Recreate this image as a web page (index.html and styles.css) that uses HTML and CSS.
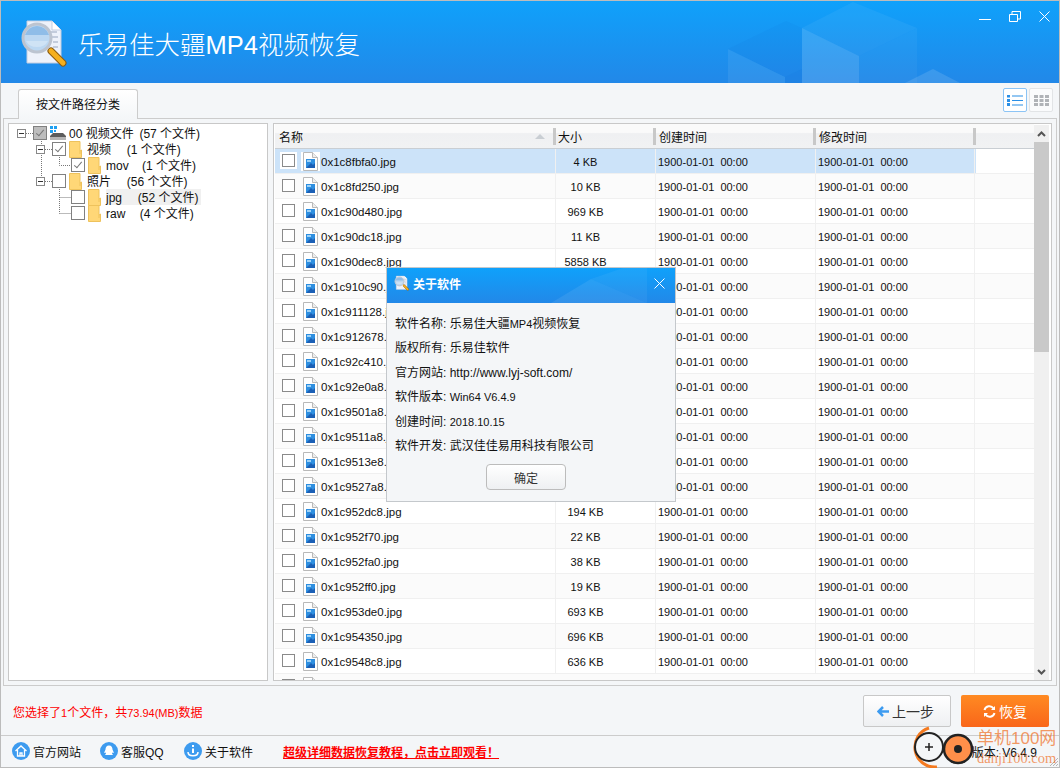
FILE: index.html
```html
<!DOCTYPE html>
<html>

<head>
    <meta charset='utf-8'>
    <title>乐易佳大疆MP4视频恢复</title>
    <link rel="stylesheet" href="styles.css">
</head>

<body>
    <svg class="defs" width="0" height="0">
        <symbol id="file" viewBox="0 0 15 19">
            <path d="M.5.5h9l5 5v13H.5z" fill="#fff" stroke="#b9b9b9" />
            <path d="M9.5.5v5h5" fill="#eee" stroke="#b9b9b9" />
            <rect x="3" y="7" width="9" height="9" fill="#2f8fe0" />
            <path d="M3 16l5-5 2 2 2-2v5z" fill="#1b5fb5" />
            <path d="M4 8h4v2H4z" fill="#9fd2f7" />
        </symbol>
        <symbol id="folder" viewBox="0 0 13 17">
            <path d="M.5.500h10.500v9.500l1.500-1v7.500H.5z" fill="#ffd777" stroke="#eec25c" />
            <path d="M11 10v3" stroke="#eec25c" />
        </symbol>
        <symbol id="logo" viewBox="0 0 50 50">
            <path d="M7 3h25l9 9v33H7z" fill="#eef2fa" stroke="#c3cde0" />
            <path d="M32 3v9h9" fill="#fff" stroke="#c3cde0" />
            <path d="M27 14h10M31 19h7M33 24h5M33 29h5" stroke="#c3ccdc" stroke-width="2" />
            <path d="M31 33l12 12" stroke="#8a5a10" stroke-width="7" stroke-linecap="round" />
            <path d="M31 33l12 12" stroke="#f5b01e" stroke-width="5" stroke-linecap="round" />
            <circle cx="17" cy="20" r="14" fill="#bcd8f2" stroke="#bcc4d0" stroke-width="3" />
            <path d="M5 17a12.500 12.500 0 0 1 24 0z" fill="#8fbde8" />
            <path d="M6 23h22a12 10 0 0 1-22 0z" fill="#cfe3f5" />
        </symbol>
    </svg>

    <div class="window">
        <div class="header">
            <svg class="header-bg" viewBox="0 0 1060 83">
                <path d="M802 27L853 1l64 26-58 28z" fill="#fff" fill-opacity=".05" />
                <path d="M802 27l57 28v28h-57z" fill="#fff" fill-opacity=".14" />
                <path d="M859 55l58-28v56h-58z" fill="#fff" fill-opacity=".04" />
                <path d="M728 48l58-28 16 7v41l-17 8z" fill="#0a50c8" fill-opacity=".05" />
                <path d="M728 48l57 28v7h-57z" fill="#fff" fill-opacity=".07" />
                <path d="M785 76l17-8v15h-17z" fill="#0a50c8" fill-opacity=".1" />
                <path d="M903 83l30-15 29 15z" fill="#fff" fill-opacity=".12" />
            </svg>
            <svg class="logo"><use href="#logo" /></svg>
            <div class="app-title">乐易佳大疆MP4视频恢复</div>
            <div class="win-buttons">
                <svg width="12" height="11" viewBox="0 0 12 11"><path d="M0 8.500h12" stroke="#fff" /></svg>
                <svg width="12" height="11" viewBox="0 0 12 11"><path d="M.5 3.500h8v7h-8zM3 3V.5h8.500V8H9" fill="none" stroke="#fff" /></svg>
                <svg width="11" height="11" viewBox="0 0 11 11"><path d="M.5.500l10 10M10.500.5l-10 10" stroke="#fff" /></svg>
            </div>
        </div>

        <div class="tabbar">
            <div class="tab">按文件路径分类</div>
            <div class="views">
                <div class="view-btn active">
                    <svg width="16" height="11" viewBox="0 0 16 11" fill="#2a8fe6"><path d="M0 0h3v2.600H0zM0 4h3v3H0zM0 8h3v3H0zM5 .5h11v1H5zM5 5h11v1H5zM5 9.500h11v1H5z" /></svg>
                </div>
                <div class="view-btn">
                    <svg width="15" height="11" viewBox="0 0 15 11" fill="#b0b3b7"><path d="M0 0h4v3H0zM5.500 0h4v3h-4zM11 0h4v3h-4zM0 4h4v3H0zM5.500 4h4v3h-4zM11 4h4v3h-4zM0 8h4v3H0zM5.500 8h4v3h-4zM11 8h4v3h-4z" /></svg>
                </div>
            </div>
        </div>

        <div class="main">
            <div class="tree">
                <svg class="tree-lines" width="100" height="110">
                    <path d="M17 9.500h7M32.500 15v38M36 25.500h7M36 57.500h7M50.500 33v8.500H62M50.500 65v24.500M50.500 73.500H62M50.500 89.500H62" fill="none" stroke="#777" stroke-dasharray="1 1" />
                </svg>
                <div class="node lvl0">
                    <span class="exp"></span><span class="check grey ticked"></span>
                    <svg class="disk" width="16" height="14" viewBox="0 0 16 14">
                        <path d="M0 0h3v3H0zM4 0h3v3H4zM0 4h3v3H0zM4 4h2v2H4z" fill="#1ea0f2" />
                        <path d="M3 7h10l3 3v1H0v-1z" fill="#5c5c5c" />
                        <path d="M0 11h16v3H0z" fill="#b4b4b4" />
                    </svg>
                    <span class="label">00 视频文件 &#8201;(57 个文件)</span>
                </div>
                <div class="node lvl1">
                    <span class="exp"></span><span class="check ticked"></span>
                    <svg class="folder"><use href="#folder" /></svg>
                    <span class="label">视频 &nbsp; &#8201;&nbsp;(1 个文件)</span>
                </div>
                <div class="node lvl2">
                    <span class="check ticked"></span>
                    <svg class="folder"><use href="#folder" /></svg>
                    <span class="label">mov &nbsp; &nbsp;(1 个文件)</span>
                </div>
                <div class="node lvl1">
                    <span class="exp"></span><span class="check"></span>
                    <svg class="folder"><use href="#folder" /></svg>
                    <span class="label">照片 &nbsp; &#8201;&nbsp;(56 个文件)</span>
                </div>
                <div class="node lvl2">
                    <span class="check"></span>
                    <svg class="folder"><use href="#folder" /></svg>
                    <span class="label current">jpg &nbsp; &#8201;&nbsp;(52 个文件)</span>
                </div>
                <div class="node lvl2">
                    <span class="check"></span>
                    <svg class="folder"><use href="#folder" /></svg>
                    <span class="label">raw &nbsp; &#8202;&nbsp;(4 个文件)</span>
                </div>
            </div>

            <div class="list">
                <div class="list-body">
                    <div class="list-head">
                        <div class="col-name">名称<span class="sort"></span></div>
                        <div class="col-size">大小</div>
                        <div class="col-date">创建时间</div>
                        <div class="col-date">修改时间</div>
                    </div>
                    <div class="rows">
                        <div class="row selected"><span class="check"></span><svg class="file"><use href="#file" /></svg><span class="name">0x1c8fbfa0.jpg</span><span class="size">4 KB</span><span class="date">1900-01-01  00:00</span><span class="date">1900-01-01  00:00</span></div>
                        <div class="row"><span class="check"></span><svg class="file"><use href="#file" /></svg><span class="name">0x1c8fd250.jpg</span><span class="size">10 KB</span><span class="date">1900-01-01  00:00</span><span class="date">1900-01-01  00:00</span></div>
                        <div class="row"><span class="check"></span><svg class="file"><use href="#file" /></svg><span class="name">0x1c90d480.jpg</span><span class="size">969 KB</span><span class="date">1900-01-01  00:00</span><span class="date">1900-01-01  00:00</span></div>
                        <div class="row"><span class="check"></span><svg class="file"><use href="#file" /></svg><span class="name">0x1c90dc18.jpg</span><span class="size">11 KB</span><span class="date">1900-01-01  00:00</span><span class="date">1900-01-01  00:00</span></div>
                        <div class="row"><span class="check"></span><svg class="file"><use href="#file" /></svg><span class="name">0x1c90dec8.jpg</span><span class="size">5858 KB</span><span class="date">1900-01-01  00:00</span><span class="date">1900-01-01  00:00</span></div>
                        <div class="row"><span class="check"></span><svg class="file"><use href="#file" /></svg><span class="name">0x1c910c90.jpg</span><span class="size"></span><span class="date">1900-01-01  00:00</span><span class="date">1900-01-01  00:00</span></div>
                        <div class="row"><span class="check"></span><svg class="file"><use href="#file" /></svg><span class="name">0x1c911128.jpg</span><span class="size"></span><span class="date">1900-01-01  00:00</span><span class="date">1900-01-01  00:00</span></div>
                        <div class="row"><span class="check"></span><svg class="file"><use href="#file" /></svg><span class="name">0x1c912678.jpg</span><span class="size"></span><span class="date">1900-01-01  00:00</span><span class="date">1900-01-01  00:00</span></div>
                        <div class="row"><span class="check"></span><svg class="file"><use href="#file" /></svg><span class="name">0x1c92c410.jpg</span><span class="size"></span><span class="date">1900-01-01  00:00</span><span class="date">1900-01-01  00:00</span></div>
                        <div class="row"><span class="check"></span><svg class="file"><use href="#file" /></svg><span class="name">0x1c92e0a8.jpg</span><span class="size"></span><span class="date">1900-01-01  00:00</span><span class="date">1900-01-01  00:00</span></div>
                        <div class="row"><span class="check"></span><svg class="file"><use href="#file" /></svg><span class="name">0x1c9501a8.jpg</span><span class="size"></span><span class="date">1900-01-01  00:00</span><span class="date">1900-01-01  00:00</span></div>
                        <div class="row"><span class="check"></span><svg class="file"><use href="#file" /></svg><span class="name">0x1c9511a8.jpg</span><span class="size"></span><span class="date">1900-01-01  00:00</span><span class="date">1900-01-01  00:00</span></div>
                        <div class="row"><span class="check"></span><svg class="file"><use href="#file" /></svg><span class="name">0x1c9513e8.jpg</span><span class="size"></span><span class="date">1900-01-01  00:00</span><span class="date">1900-01-01  00:00</span></div>
                        <div class="row"><span class="check"></span><svg class="file"><use href="#file" /></svg><span class="name">0x1c9527a8.jpg</span><span class="size"></span><span class="date">1900-01-01  00:00</span><span class="date">1900-01-01  00:00</span></div>
                        <div class="row"><span class="check"></span><svg class="file"><use href="#file" /></svg><span class="name">0x1c952dc8.jpg</span><span class="size">194 KB</span><span class="date">1900-01-01  00:00</span><span class="date">1900-01-01  00:00</span></div>
                        <div class="row"><span class="check"></span><svg class="file"><use href="#file" /></svg><span class="name">0x1c952f70.jpg</span><span class="size">22 KB</span><span class="date">1900-01-01  00:00</span><span class="date">1900-01-01  00:00</span></div>
                        <div class="row"><span class="check"></span><svg class="file"><use href="#file" /></svg><span class="name">0x1c952fa0.jpg</span><span class="size">38 KB</span><span class="date">1900-01-01  00:00</span><span class="date">1900-01-01  00:00</span></div>
                        <div class="row"><span class="check"></span><svg class="file"><use href="#file" /></svg><span class="name">0x1c952ff0.jpg</span><span class="size">19 KB</span><span class="date">1900-01-01  00:00</span><span class="date">1900-01-01  00:00</span></div>
                        <div class="row"><span class="check"></span><svg class="file"><use href="#file" /></svg><span class="name">0x1c953de0.jpg</span><span class="size">693 KB</span><span class="date">1900-01-01  00:00</span><span class="date">1900-01-01  00:00</span></div>
                        <div class="row"><span class="check"></span><svg class="file"><use href="#file" /></svg><span class="name">0x1c954350.jpg</span><span class="size">696 KB</span><span class="date">1900-01-01  00:00</span><span class="date">1900-01-01  00:00</span></div>
                        <div class="row"><span class="check"></span><svg class="file"><use href="#file" /></svg><span class="name">0x1c9548c8.jpg</span><span class="size">636 KB</span><span class="date">1900-01-01  00:00</span><span class="date">1900-01-01  00:00</span></div>
                        <div class="row"><span class="check"></span><svg class="file"><use href="#file" /></svg></div>
                    </div>
                </div>
                <div class="scrollbar">
                    <div class="arrow">
                        <svg width="9" height="6" viewBox="0 0 9 6"><path d="M1 5l3.500-3.500L8 5" fill="none" stroke="#555" stroke-width="2" /></svg>
                    </div>
                    <div class="thumb"></div>
                    <div class="track"></div>
                    <div class="arrow">
                        <svg width="9" height="6" viewBox="0 0 9 6"><path d="M1 1l3.500 3.500L8 1" fill="none" stroke="#555" stroke-width="2" /></svg>
                    </div>
                </div>
            </div>
        </div>

        <div class="actions">
            <div class="selected-info">您选择了<span class="num">1</span>个文件，共<span class="num">73.94(MB)</span>数据</div>
            <div class="button back">
                <svg width="12" height="11" viewBox="0 0 12 11"><path d="M6 1L1.500 5.500 6 10M2 5.500h10" fill="none" stroke="#3d9bf0" stroke-width="2.500" /></svg>
                上一步
            </div>
            <div class="button recover">
                <svg width="13" height="13" viewBox="0 0 13 13"><path d="M1.500 5a5 5 0 0 1 9-1.500M11.500 8a5 5 0 0 1-9 1.500" fill="none" stroke="#fff" stroke-width="2" /><path d="M12 1v4H8zM1 12V8h4z" fill="#fff" /></svg>
                恢复
            </div>
        </div>

        <div class="footer">
            <div class="foot-link">
                <svg width="18" height="18" viewBox="0 0 18 18"><circle cx="9" cy="9" r="9" fill="#3d9bef" /><path d="M3.500 9L9 4l5.500 5M5.500 8v6h7V8M8 14v-3h2v3" fill="none" stroke="#fff" stroke-width="1.300" /></svg>
                官方网站
            </div>
            <div class="foot-link">
                <svg width="18" height="18" viewBox="0 0 18 18"><circle cx="9" cy="9" r="9" fill="#3d9bef" /><path d="M9 3.500c2.500 0 3.500 2 3.500 4l1.500 3.500-1.500-.5-.5 1 1 1.500H5l1-1.500-.5-1L4 11l1.500-3.500c0-2 1-4 3.500-4z" fill="#fff" /></svg>
                客服QQ
            </div>
            <div class="foot-link">
                <svg width="18" height="18" viewBox="0 0 18 18"><circle cx="9" cy="9" r="9" fill="#3d9bef" /><path d="M8 3h2v2H8zM8 6.500h2V11H8z" fill="#fff" /><path d="M4 10c0 5 10 5 10 0" fill="none" stroke="#fff" stroke-width="1.500" /></svg>
                关于软件
            </div>
            <div class="tutorial">超级详细数据恢复教程，点击立即观看！</div>
            <div class="version">版本: V6.4.9</div>
            <svg class="grip" width="8" height="8" viewBox="0 0 8 8"><path d="M8 0L0 8M8 3L3 8M8 6L6 8" stroke="#b5b5b5" /></svg>
        </div>
    </div>

    <div class="dialog">
        <div class="dialog-title">
            <svg class="dialog-bg" viewBox="0 0 288 35">
                <path d="M164 35l40-24 56 24z" fill="#fff" fill-opacity=".08" />
                <path d="M204 11l32-11h24v35z" fill="#fff" fill-opacity=".05" />
            </svg>
            <svg class="dialog-logo"><use href="#logo" /></svg>
            <span class="dialog-name">关于软件</span>
            <svg class="dialog-close" width="11" height="11" viewBox="0 0 11 11"><path d="M.5.5l10 10M10.500.5l-10 10" stroke="#fff" /></svg>
        </div>
        <div class="dialog-body">
            <div>软件名称: 乐易佳大疆<span class="num">MP4</span>视频恢复</div>
            <div>版权所有: 乐易佳软件</div>
            <div>官方网站: http://www.lyj-soft.com/</div>
            <div>软件版本: <span class="num">Win64 V6.4.9</span></div>
            <div>创建时间: <span class="num">2018.10.15</span></div>
            <div>软件开发: 武汉佳佳易用科技有限公司</div>
        </div>
        <div class="button ok">确定</div>
    </div>

    <div class="watermark">
        <svg class="wm-logo" width="66" height="44" viewBox="0 0 66 44">
            <path d="M17 2A20 20 0 0 0 25 41" fill="none" stroke="#f47a20" stroke-width="3" />
            <circle cx="17" cy="21" r="14" fill="#f4f6f8" stroke="#222" stroke-width="2" />
            <path d="M13 21h8M17 17v8" stroke="#222" stroke-width="1.500" />
            <circle cx="46" cy="23" r="14" fill="#ff8f4a" stroke="#222" stroke-width="2.500" />
            <circle cx="46" cy="23" r="4" fill="#222" />
        </svg>
        <div class="wm-text">
            <div class="wm-cn">单机100网</div>
            <div class="wm-en">danji100.com</div>
        </div>
    </div>
</body>

</html>
```

FILE: styles.css
```css
body {
    margin: 0;
    width: 1060px;
    height: 768px;
    position: relative;
    overflow: hidden;
    font-family: "Liberation Sans", "Noto Sans CJK SC", sans-serif;
    font-size: 12px;
    color: #111;
}
.defs {
    display: block;
}
.num {
    font-size: 11px;
}
.window {
    display: flex;
    flex-direction: column;
    height: 100%;
    box-sizing: border-box;
    border: 1px solid #bcbcbc;
    background: #f4f6f8;
}

/* title bar */
.header {
    position: relative;
    display: flex;
    align-items: center;
    height: 82px;
    flex: none;
    padding-left: 19px;
    background: linear-gradient(#0fa1fb, #2288e8);
    overflow: hidden;
}
.header-bg {
    position: absolute;
    left: -1px;
    top: 0;
    width: 1060px;
    height: 83px;
}
.logo {
    position: relative;
    width: 50px;
    height: 50px;
    margin-top: 2px;
}
.app-title {
    position: relative;
    margin-left: 8px;
    font-size: 25.5px;
    font-weight: 300;
    color: #fff;
}
.win-buttons {
    position: absolute;
    right: 9px;
    top: 10px;
    display: flex;
    gap: 18px;
}

/* tabs */
.tabbar {
    display: flex;
    align-items: flex-end;
    justify-content: space-between;
    height: 35px;
    flex: none;
    padding: 0 6px 0 17px;
}
.tab {
    width: 118px;
    height: 29px;
    line-height: 30px;
    text-align: center;
    background: linear-gradient(#fff, #f4f6f8);
    border: 1px solid #ccc;
    border-bottom: none;
    border-radius: 3px 3px 0 0;
    margin-bottom: -1px;
    position: relative;
    z-index: 1;
}
.views {
    display: flex;
    gap: 2px;
    align-self: flex-start;
    margin-top: 5px;
}
.view-btn {
    display: flex;
    align-items: center;
    justify-content: center;
    width: 22px;
    height: 22px;
    border: 1px solid #e2e4e6;
    border-radius: 2px;
    background: #fafbfc;
}
.view-btn.active {
    border-color: #8cc4f5;
    background: #fff;
}

/* main panes */
.main {
    display: flex;
    gap: 5px;
    height: 568px;
    flex: none;
    box-sizing: border-box;
    margin: 0 2px;
    padding: 4px;
    border: 1px solid #ccc;
}
.tree {
    position: relative;
    width: 260px;
    flex: none;
    box-sizing: border-box;
    padding-top: 1px;
    background: #fff;
    border: 1px solid #c8c8c8;
}
.tree-lines {
    position: absolute;
    left: 0;
    top: 0;
}
.node {
    position: relative;
    display: flex;
    align-items: center;
    height: 16px;
}
.lvl0 {
    padding-left: 8px;
}
.lvl1 {
    padding-left: 27px;
}
.lvl2 {
    padding-left: 62px;
}
.exp {
    position: relative;
    width: 7px;
    height: 7px;
    margin-right: 7px;
    border: 1px solid #888;
    background: #fff;
}
.exp::after {
    content: "";
    position: absolute;
    left: 1px;
    top: 3px;
    width: 5px;
    height: 1px;
    background: #333;
}
.check {
    display: inline-block;
    position: relative;
    width: 12px;
    height: 12px;
    flex: none;
    border: 1px solid #808080;
    background: #fff;
}
.check.grey {
    background: #bdbdbd;
}
.check.ticked::after {
    content: "";
    position: absolute;
    left: 4px;
    top: 1px;
    width: 3px;
    height: 7px;
    border: solid #777;
    border-width: 0 1px 1px 0;
    transform: rotate(40deg);
}
.disk {
    margin-left: 3px;
}
.folder {
    width: 13px;
    height: 17px;
    margin-left: 3px;
}
.label {
    margin-left: 5px;
    height: 16px;
    line-height: 18px;
    white-space: nowrap;
}
.lvl0 .label {
    margin-left: 3px;
}
.current {
    background: #f0f0f0;
    padding-right: 3px;
}
.list {
    display: flex;
    flex: 1;
    min-width: 0;
    box-sizing: border-box;
    padding: 0 2px 0 1px;
    background: #fff;
    border: 1px solid #c8c8c8;
    overflow: hidden;
}
.list-body {
    width: 759px;
    flex: none;
    overflow: hidden;
}
.list-head {
    display: flex;
    align-items: center;
    height: 25px;
    box-sizing: border-box;
    border-bottom: 1px solid #c9ced3;
    background: linear-gradient(#fafafa 35%, #eff0f2 40%, #f1f2f3);
}
.list-head div {
    position: relative;
    box-sizing: border-box;
    height: 100%;
    line-height: 28px;
    padding-left: 3px;
}
.list-head div::after {
    content: "";
    position: absolute;
    right: 0;
    top: 4px;
    width: 3px;
    height: 17px;
    background: #c8c8c8;
}
.list-head .col-name {
    width: 281px;
    padding-left: 4px;
}
.list-head .col-size {
    width: 100px;
    padding-left: 2px;
}
.col-date {
    width: 160px;
}
.sort {
    position: absolute;
    right: 11px;
    top: 10px;
    border: 5px solid transparent;
    border-top: none;
    border-bottom: 5px solid #c9ced3;
}
.row {
    display: flex;
    align-items: center;
    height: 25px;
    box-sizing: border-box;
    border-bottom: 1px solid #f0f0f0;
    background: #fff;
}
.row:nth-child(even) {
    background: #fbfbfb;
}
.row > .check {
    width: 11px;
    height: 11px;
    margin-left: 7px;
    margin-bottom: 1px;
    border: 1px solid #8a8a8a;
}
.row.selected {
    background: linear-gradient(to right, #cce3f9 701px, #fff 701px);
}
.row.selected .check {
    box-shadow: 0 0 0 2px #fff;
}
.row.selected .file {
    background: #fff;
    box-shadow: 2px 0 0 #fff, -2px 0 0 #fff;
}
.file {
    width: 15px;
    height: 19px;
    margin-left: 8px;
    flex: none;
}
.name {
    width: 237px;
    padding: 2px 0 0 3px;
    box-sizing: border-box;
    font-size: 11.5px;
}
.size {
    width: 100px;
    box-sizing: border-box;
    padding-right: 40px;
    text-align: center;
    font-size: 11px;
    border-left: 1px solid #f0f0f0;
    line-height: 26px;
    height: 24px;
}
.date {
    width: 160px;
    box-sizing: border-box;
    padding-left: 2px;
    font-size: 11px;
    white-space: pre;
    border-left: 1px solid #f0f0f0;
    line-height: 26px;
    height: 24px;
}
.date:last-child {
    border-right: 1px solid #f0f0f0;
}
.scrollbar {
    display: flex;
    flex-direction: column;
    width: 15px;
    margin-left: auto;
    background: #f0f0f0;
    margin-top: 1px;
}
.arrow {
    display: flex;
    align-items: center;
    justify-content: center;
    height: 17px;
    flex: none;
}
.thumb {
    height: 210px;
    flex: none;
    background: #c9c9c9;
}
.track {
    flex: 1;
}

/* bottom bars */
.actions {
    display: flex;
    align-items: center;
    flex: 1;
    gap: 10px;
    padding: 1px 10px 0 12px;
    border-bottom: 1px solid #ccc;
}
.selected-info {
    flex: 1;
    color: #f00;
}
.button {
    display: flex;
    align-items: center;
    justify-content: center;
    gap: 5px;
    box-sizing: border-box;
    width: 88px;
    height: 32px;
    font-size: 14px;
    border-radius: 2px;
}
.back {
    color: #333;
    gap: 3px;
    padding-right: 3px;
    border: 1px solid #c8c8c8;
    background: linear-gradient(#fff, #eef0f2);
}
.recover {
    gap: 3px;
    color: #fff;
    background: linear-gradient(#ff8a22, #f9661a);
}
.footer {
    display: flex;
    align-items: center;
    height: 31px;
    box-sizing: border-box;
    padding: 0 0 1px 11px;
    flex: none;
    position: relative;
}
.foot-link {
    display: flex;
    align-items: center;
    gap: 3px;
    width: 88px;
}
.foot-link:nth-child(2) {
    width: 84px;
}
.foot-link:nth-child(3) {
    width: 99px;
}
.tutorial {
    color: #f00;
    font-weight: bold;
    text-decoration: underline;
}
.version {
    margin-left: auto;
    margin-right: 22px;
}
.grip {
    position: absolute;
    right: 1px;
    bottom: 1px;
}

/* about dialog */
.dialog {
    position: absolute;
    left: 386px;
    top: 267px;
    width: 290px;
    height: 235px;
    box-sizing: border-box;
    border: 1px solid #c4c8cc;
    background: #f4f6f8;
}
.dialog-title {
    position: relative;
    display: flex;
    align-items: center;
    height: 35px;
    box-sizing: border-box;
    padding: 0 0 5px 7px;
    background: linear-gradient(#0fa1fb, #2288e8);
    color: #fff;
    overflow: hidden;
}
.dialog-bg {
    position: absolute;
    left: 0;
    top: 0;
    width: 288px;
    height: 35px;
}
.dialog-logo {
    position: relative;
    width: 16px;
    height: 16px;
}
.dialog-name {
    position: relative;
    margin-left: 3px;
    font-weight: bold;
}
.dialog-close {
    position: absolute;
    right: 10px;
    top: 10px;
}
.dialog-body {
    padding: 9px 0 0 8px;
    line-height: 24.4px;
}
.ok {
    width: 80px;
    height: 26px;
    margin: 6px 0 0 99px;
    color: #333;
    font-size: 12px;
    border: 1px solid #bcbcbc;
    border-radius: 4px;
    background: linear-gradient(#fff, #eef0f2);
}

/* site watermark */
.watermark {
    position: absolute;
    left: 912px;
    top: 726px;
    display: flex;
}
.wm-text {
    margin-left: -1px;
    padding-top: 2px;
    color: rgba(240, 110, 30, 0.7);
}
.wm-cn {
    font-size: 17px;
    line-height: 22px;
    white-space: nowrap;
}
.wm-en {
    font-family: "Liberation Serif", serif;
    font-size: 14.5px;
    line-height: 16px;
}
```
